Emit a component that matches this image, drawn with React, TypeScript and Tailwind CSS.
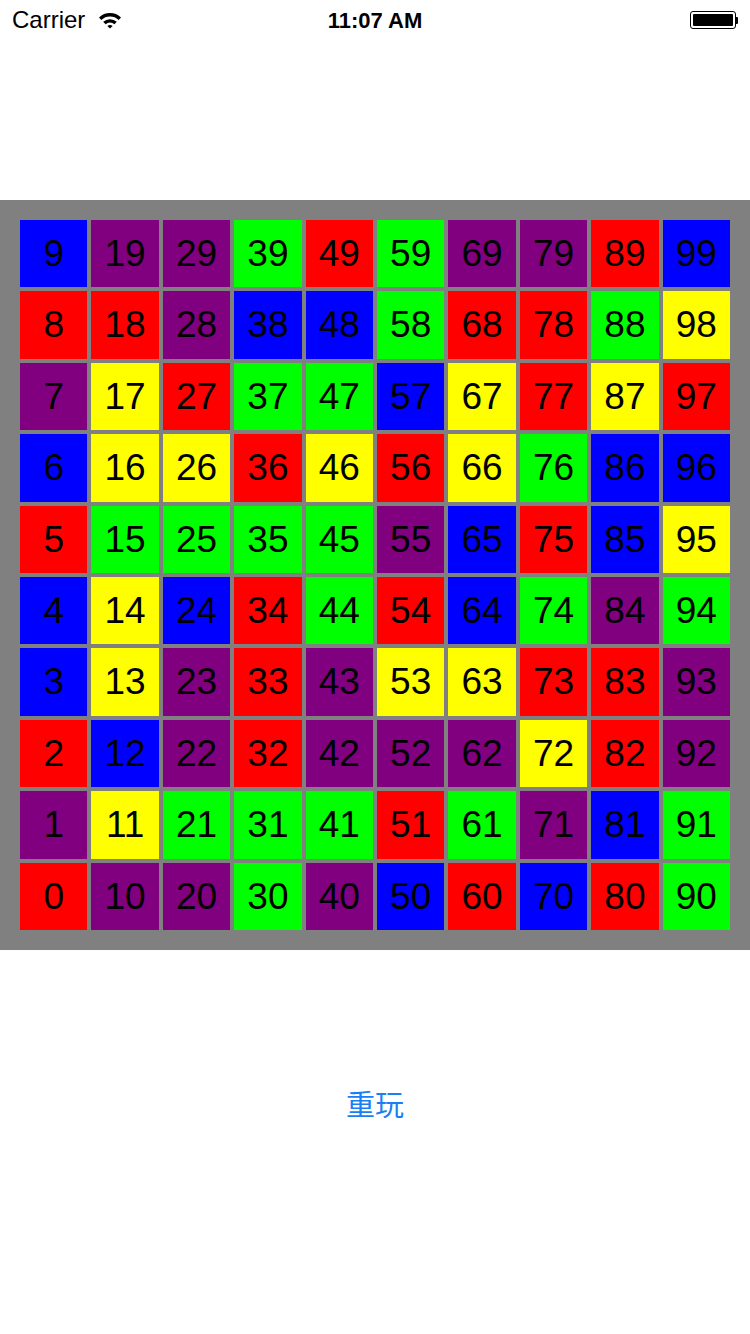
import React from "react"

// columns are tens digit, letters run top (x9) to bottom (x0)
const columns = [
  "BRPBRBBRPR",
  "PRYYGYYBYP",
  "PPRYGBPPGP",
  "GBGRGRRRGG",
  "RBGYGGPPGP",
  "GGBRPRYPRB",
  "PRYYBBYPGR",
  "PRRGRGRYPB",
  "RGYBBPRRBR",
  "BYRBYGPPGG",
]

const bg: Record<string, string> = {
  B: "bg-[#0000ff]",
  R: "bg-[#ff0000]",
  P: "bg-[#800080]",
  G: "bg-[#00ff00]",
  Y: "bg-[#ffff00]",
}

function StatusBar() {
  return (
    <div className="relative flex h-[40px] items-center px-[12px] text-[22px] text-black [font-family:'Liberation_Sans',Arial,sans-serif]">
      <span className="text-[24px]">Carrier</span>
      <svg className="ml-[13px] mt-[-1px]" width="24" height="18" viewBox="0 0 24 18">
        <path d="M1 6.5 A16 16 0 0 1 23 6.5 L20.6 9 A12.6 12.6 0 0 0 3.4 9 Z" fill="black" />
        <path d="M5.2 10.8 A10 10 0 0 1 18.8 10.8 L16.4 13.2 A6.6 6.6 0 0 0 7.6 13.2 Z" fill="black" />
        <path d="M9.4 15 A4 4 0 0 1 14.6 15 L12 17.6 Z" fill="black" />
      </svg>
      <span className="absolute left-0 right-0 text-center font-bold">11:07 AM</span>
      <div className="ml-auto flex items-center">
        <div className="h-[18px] w-[46px] rounded-[3px] border-[1.5px] border-black p-[2px]">
          <div className="h-full w-full rounded-[1px] bg-black" />
        </div>
        <div className="h-[7px] w-[2.5px] rounded-r-[1px] bg-black" />
      </div>
    </div>
  )
}

export default function App() {
  const cells: { n: number; c: string }[] = []
  for (let r = 0; r < 10; r++) {
    for (let c = 0; c < 10; c++) {
      cells.push({ n: c * 10 + (9 - r), c: columns[c][r] })
    }
  }

  return (
    <div className="h-[1334px] w-[750px] bg-white">
      <StatusBar />
      <div className="h-[160px]" />
      <div className="h-[750px] bg-[#808080] p-[20px]">
        <div className="grid h-[710px] grid-cols-10 grid-rows-10 gap-[4px]">
          {cells.map((cell) => (
            <div
              key={cell.n}
              className={`flex items-center justify-center text-[37px] text-black [font-family:'Liberation_Sans',Arial,sans-serif] ${bg[cell.c]}`}
            >
              {cell.n}
            </div>
          ))}
        </div>
      </div>
      <div className="flex justify-center pt-[136px]">
        <button className="text-[29px] leading-[34px] text-[#1a7ff5] [font-family:'Noto_Sans_CJK_SC',sans-serif]">
          重玩
        </button>
      </div>
    </div>
  )
}
